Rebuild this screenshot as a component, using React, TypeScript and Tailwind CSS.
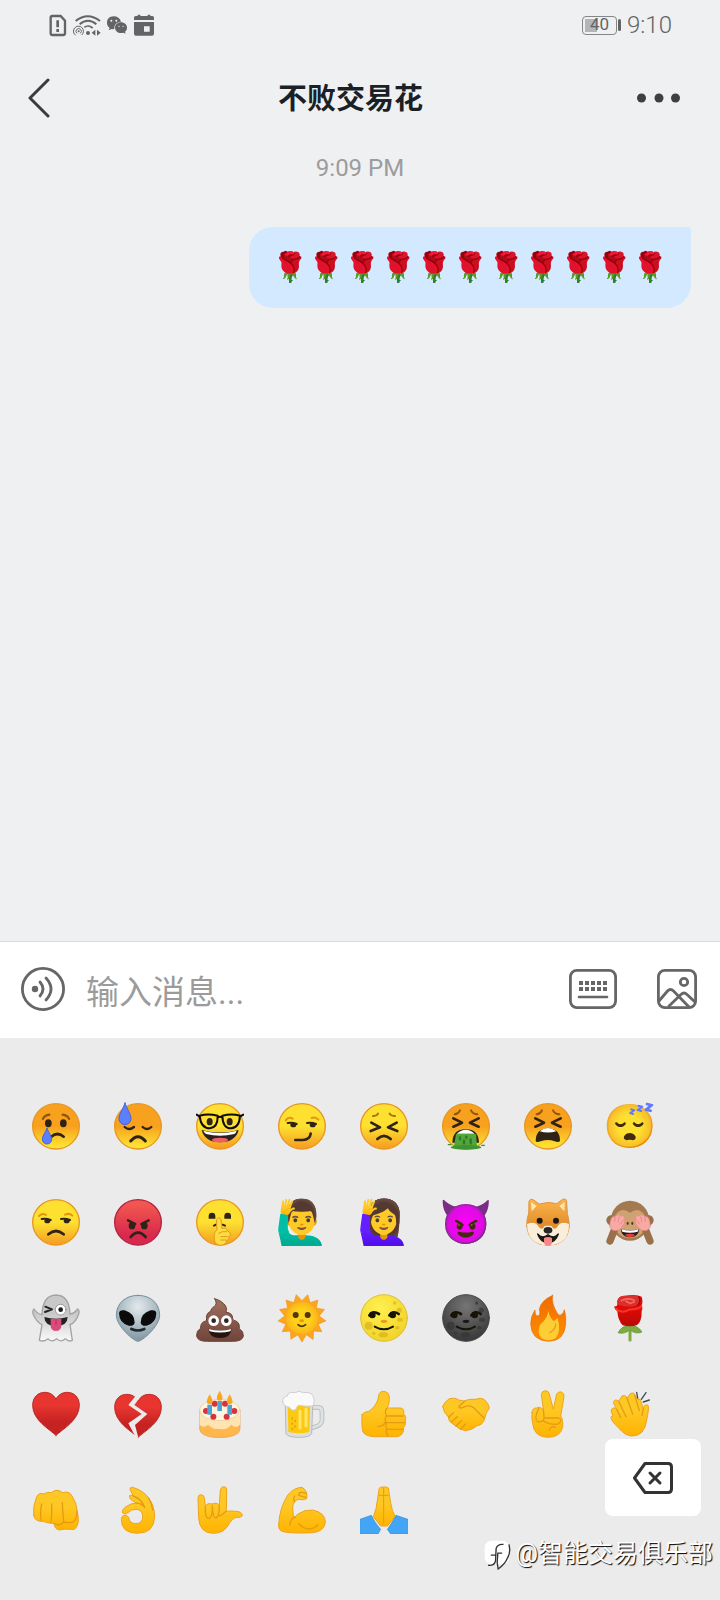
import React from 'react';

type Tone = 'yellow' | 'orange' | 'red';

interface FaceProps {
  tone?: Tone;
  children: React.ReactNode;
}

interface EmojiItem {
  char: string;
  label: string;
  art?: React.ReactNode;
}

const fills: Record<Tone, string> = {
  yellow: 'url(#tone-yellow)',
  orange: 'url(#tone-orange)',
  red: 'url(#tone-red)',
};

const INK = '#2f2316';

const Gradients = () => (
  <svg className="absolute h-0 w-0" aria-hidden="true">
    <defs>
      <linearGradient id="tone-yellow" x1="0" y1="0" x2="0" y2="1">
        <stop offset="0.5" stopColor="#fde030" />
        <stop offset="1" stopColor="#f59b22" />
      </linearGradient>
      <linearGradient id="tone-orange" x1="0" y1="0" x2="0" y2="1">
        <stop offset="0.5" stopColor="#f7a11f" />
        <stop offset="0.92" stopColor="#fde030" />
      </linearGradient>
      <linearGradient id="tone-red" x1="0" y1="0" x2="0" y2="1">
        <stop offset="0.1" stopColor="#f2574f" />
        <stop offset="0.8" stopColor="#d8284e" />
      </linearGradient>
      <linearGradient id="heart" x1="0" y1="0" x2="0" y2="1">
        <stop offset="0.3" stopColor="#e8352f" />
        <stop offset="0.7" stopColor="#c62222" />
      </linearGradient>
      <linearGradient id="flame" x1="0" y1="0" x2="0" y2="1">
        <stop offset="0" stopColor="#f06a00" />
        <stop offset="1" stopColor="#ff8f00" />
      </linearGradient>
      <linearGradient id="shiba" x1="0" y1="0" x2="0" y2="1">
        <stop offset="0" stopColor="#fdb54a" />
        <stop offset="0.6" stopColor="#e08c2b" />
      </linearGradient>
      <linearGradient id="skin" x1="0" y1="0" x2="0" y2="1">
        <stop offset="0.4" stopColor="#fec824" />
        <stop offset="1" stopColor="#ffb300" />
      </linearGradient>
      <linearGradient id="ghost" x1="0" y1="0" x2="0" y2="1">
        <stop offset="0.4" stopColor="#c8c8c8" />
        <stop offset="1" stopColor="#fafafa" />
      </linearGradient>
      <linearGradient id="poop" x1="0" y1="0" x2="0" y2="1">
        <stop offset="0" stopColor="#a1705f" />
        <stop offset="1" stopColor="#70453a" />
      </linearGradient>
      <linearGradient id="petal" x1="0" y1="0" x2="0" y2="1">
        <stop offset="0.4" stopColor="#e20a05" />
        <stop offset="1" stopColor="#b70a08" />
      </linearGradient>
      <radialGradient id="alien" cx="0.5" cy="0.25" r="0.7">
        <stop offset="0" stopColor="#e3eaee" />
        <stop offset="1" stopColor="#869ba6" />
      </radialGradient>
      <radialGradient id="sun" cx="0.5" cy="0.5" r="0.5">
        <stop offset="0.5" stopColor="#fdd31a" />
        <stop offset="1" stopColor="#fbb51c" />
      </radialGradient>
      <radialGradient id="moon-dark" cx="0.5" cy="0.25" r="0.7">
        <stop offset="0" stopColor="#757575" />
        <stop offset="1" stopColor="#3c3c3c" />
      </radialGradient>
      <radialGradient id="moon-light" cx="0.4" cy="0.3" r="0.7">
        <stop offset="0" stopColor="#fff04f" />
        <stop offset="1" stopColor="#f2d42a" />
      </radialGradient>
    </defs>
  </svg>
);

const Art = ({ children }: { children: React.ReactNode }) => (
  <svg viewBox="0 0 144 144" className="h-12 w-12" fill="none" strokeLinecap="round" strokeLinejoin="round" aria-hidden="true">
    {children}
  </svg>
);

const Face: React.FC<FaceProps> = ({ tone = 'yellow', children }) => (
  <Art>
    <ellipse cx="72" cy="73" rx="70" ry="68" fill={fills[tone]} stroke={tone === 'red' ? '#b3233f' : '#e8961f'} strokeWidth="4" />
    {children}
  </Art>
);

const Hand = ({ shape, lines, children }: { shape: string; lines: string; children?: React.ReactNode }) => (
  <Art>
    <path d={shape} fill="url(#skin)" stroke="#efa31d" strokeWidth="3" />
    <path d={lines} stroke="#e59b14" strokeWidth="4" />
    {children}
  </Art>
);

const Squint = () => (
  <path d="M34 49 60 62 34 74M110 49 84 62 110 74" stroke={INK} strokeWidth="8" />
);

const SideEyes = () => (
  <g>
    <path d="M29 63Q42 60 56 66M87 63Q100 60 114 66" stroke={INK} strokeWidth="6" />
    <ellipse cx="46" cy="69" rx="9" ry="7" fill={INK} />
    <ellipse cx="104" cy="69" rx="9" ry="7" fill={INK} />
  </g>
);

const Moon = ({ dark = false }: { dark?: boolean }) => (
  <Art>
    <circle cx="72" cy="72" r="70" fill={dark ? 'url(#moon-dark)' : 'url(#moon-light)'} stroke={dark ? '#444' : '#dcbf35'} strokeWidth="3" />
    <g fill={dark ? '#353535' : '#d9b21c'} opacity="0.7">
      <circle cx="26" cy="95" r="12" />
      <circle cx="118" cy="49" r="8" />
      <circle cx="104" cy="27" r="5" />
      <ellipse cx="120" cy="77" rx="9" ry="6" />
      <ellipse cx="112" cy="101" rx="7" ry="5" />
      <ellipse cx="70" cy="122" rx="14" ry="8" />
      <circle cx="41" cy="118" r="5" />
    </g>
    <path d="M28 64Q38 48 57 60M88 64Q98 48 116 60" stroke="#171407" strokeWidth="8" />
    <circle cx="37" cy="63" r="10" fill="#171407" />
    <circle cx="98" cy="63" r="10" fill="#171407" />
    <ellipse cx="72" cy="82" rx="10" ry="5" fill={dark ? '#171717' : '#ee9a13'} />
    <path d="M44 98Q72 114 99 98" stroke="#171407" strokeWidth="6" />
  </Art>
);

const HEART = 'M72 136C50 116 2 90 2 46 2 20 20 7 38 7 54 7 66 15 72 28 78 15 90 7 106 7 124 7 142 20 142 46 142 90 94 116 72 136Z';

const RAYS = 13;
const sunPoints = Array.from({ length: RAYS * 2 }, (_, i) => {
  const angle = (Math.PI * i) / RAYS + Math.PI / 2 - Math.PI / RAYS;
  const r = i % 2 === 0 ? 52 : 72;
  return `${(72 + r * Math.cos(angle)).toFixed(1)},${(72 + r * Math.sin(angle)).toFixed(1)}`;
}).join(' ');

const crying = (
  <Face tone="orange">
    <path d="M33 50Q38 40 52 38M92 38Q106 40 111 50" stroke="#93550c" strokeWidth="7" />
    <ellipse cx="49" cy="64" rx="10" ry="12" fill={INK} />
    <ellipse cx="94" cy="64" rx="10" ry="12" fill={INK} />
    <path d="M58 104Q76 88 95 104" stroke={INK} strokeWidth="8" />
    <path d="M45 79C49 92 59 100 59 112A14 14 0 0 1 31 112C31 100 41 92 45 79Z" fill="#5c7fff" stroke="#4a62d0" strokeWidth="3" />
  </Face>
);

const sweating = (
  <Face tone="orange">
    <path d="M33 3C38 20 51 36 51 50A18 18 0 0 1 15 50C15 36 28 20 33 3Z" fill="#5c7fff" stroke="#4a62d0" strokeWidth="3" />
    <path d="M32 75Q45 87 60 75M86 75Q99 87 112 75" stroke={INK} strokeWidth="7" />
    <path d="M50 117Q72 91 94 117" stroke={INK} strokeWidth="9" />
  </Face>
);

const nerd = (
  <Face>
    <ellipse cx="41" cy="59" rx="9" ry="11" fill={INK} />
    <ellipse cx="101" cy="59" rx="9" ry="11" fill={INK} />
    <path d="M17 84Q72 99 128 84 119 120 72 121 26 120 17 84Z" fill="#2b2020" />
    <path d="M22 86Q72 100 122 86 120 93 115 96 72 106 30 96 24 92 22 86Z" fill="#fff" />
    <ellipse cx="72" cy="114" rx="24" ry="7" fill="#ee5e68" />
    <path d="M11 41Q36 34 65 41 66 77 42 79 14 79 11 41ZM79 41Q107 34 132 41 130 78 105 79 80 79 79 41ZM65 46Q72 43 79 46M2 38 11 44M142 38 132 44" stroke="#0c0c0c" strokeWidth="6" />
  </Face>
);

const smirking = (
  <Face>
    <path d="M23 55Q31 43 44 50M101 48Q113 43 121 53" stroke="#e5960f" strokeWidth="6" />
    <SideEyes />
    <path d="M52 114H74Q96 113 98 95" stroke={INK} strokeWidth="8" />
  </Face>
);

const persevering = (
  <Face>
    <path d="M39 42Q49 43 54 35M89 35Q94 43 105 42" stroke="#ad7008" strokeWidth="6" />
    <path d="M34 62 60 76 32 87M110 62 84 76 112 87" stroke={INK} strokeWidth="8" />
    <path d="M52 111Q72 92 92 111" stroke={INK} strokeWidth="8" />
  </Face>
);

const vomiting = (
  <Face tone="orange">
    <path d="M38 37Q49 36 54 25M87 25Q92 36 106 37" stroke="#93550c" strokeWidth="6" />
    <Squint />
    <path d="M31 122Q32 82 71 82 110 82 111 122Z" fill={INK} />
    <path d="M44 95Q72 72 98 95Z" fill="#fff" />
    <path d="M42 96H102L105 132H36Z" fill="#53a63b" />
    <ellipse cx="72" cy="136" rx="46" ry="7" fill="#3f9430" />
    <path d="M54 106V112M66 116V124M73 104V107M86 112V124" stroke="#2c7a24" strokeWidth="7" />
    <path d="M19 128H27M119 130H127" stroke="#3f9430" strokeWidth="4" />
  </Face>
);

const tired = (
  <Face tone="orange">
    <path d="M38 37Q49 36 54 25M87 25Q92 36 106 37" stroke="#93550c" strokeWidth="6" />
    <Squint />
    <path d="M35 117Q36 80 72 79 108 80 108 117 104 123 92 118 72 110 50 118 36 123 35 117Z" fill={INK} />
    <path d="M47 88Q71 68 97 88 72 95 47 88Z" fill="#fff" />
  </Face>
);

const unamused = (
  <Face>
    <path d="M21 54Q31 44 42 51M99 50Q112 44 121 53" stroke="#e5960f" strokeWidth="6" />
    <SideEyes />
    <path d="M49 109Q72 89 95 109" stroke={INK} strokeWidth="8" />
  </Face>
);

const enraged = (
  <Face tone="red">
    <path d="M42 67 64 78M104 67 82 78" stroke={INK} strokeWidth="7" />
    <ellipse cx="54" cy="83" rx="10" ry="11" fill={INK} />
    <ellipse cx="91" cy="83" rx="10" ry="11" fill={INK} />
    <path d="M50 117Q72 91 95 117" stroke={INK} strokeWidth="8" />
  </Face>
);

const shushing = (
  <Face>
    <path d="M38 62V54A10 10 0 0 1 58 54V62ZM85 62V54A10 10 0 0 1 105 54V62Z" fill={INK} />
    <path d="M54 83 60 80M80 80 87 83" stroke={INK} strokeWidth="6" />
    <path d="M62 64Q69 54 75 64L78 92Q90 86 94 98 107 104 101 116 98 126 92 128 90 141 72 142 56 140 55 124 52 104 62 96Z" fill="#fddc40" stroke="#df9a1e" strokeWidth="3" />
    <path d="M68 106Q78 98 92 101M74 116H97M74 126H91" stroke="#df9a1e" strokeWidth="3" />
  </Face>
);

const shiba = (
  <Art>
    <path d="M15 10Q18 0 29 6L46 18Q72 9 98 17L116 4Q128 0 128 12L130 46Q136 68 136 86 130 141 72 142 14 141 8 84 8 62 14 46Z" fill="url(#shiba)" stroke="#dd9642" strokeWidth="3" />
    <path d="M21 12 38 24 23 40ZM122 12 106 24 121 40Z" fill="#ffe7b5" />
    <path d="M9 78Q34 68 44 86 72 80 100 86 110 68 135 78 136 141 72 142 10 141 9 78Z" fill="#faeedb" />
    <path d="M44 87Q55 98 60 86L72 72 84 86Q90 98 100 87 88 70 72 70 56 70 44 87Z" fill="#df8d2e" />
    <circle cx="47" cy="68" r="9" fill="#1c1712" />
    <circle cx="96" cy="68" r="9" fill="#1c1712" />
    <ellipse cx="72" cy="97" rx="13" ry="10" fill="#262626" />
    <path d="M41 108Q54 124 72 110 90 124 103 108 94 134 72 134 50 134 41 108Z" fill="#1c1712" stroke="#1c1712" strokeWidth="4" />
    <path d="M60 120Q72 114 84 120V132A12 11 0 0 1 60 132Z" fill="#f78787" />
  </Art>
);

const monkey = (
  <Art>
    <circle cx="17" cy="67" r="16" fill="#99704a" />
    <circle cx="127" cy="67" r="16" fill="#99704a" />
    <ellipse cx="72" cy="68" rx="58" ry="60" fill="#a37a4f" />
    <path d="M72 44Q42 24 26 56 20 118 72 121 124 118 118 56 102 24 72 44Z" fill="#d0a173" />
    <ellipse cx="65" cy="76" rx="3" ry="5" fill="#5b3b22" />
    <ellipse cx="79" cy="76" rx="3" ry="5" fill="#5b3b22" />
    <path d="M44 92Q72 102 100 92 97 118 72 118 47 118 44 92Z" fill="#2b2020" />
    <path d="M46 93Q72 102 98 93L95 101Q72 107 49 101Z" fill="#fff" />
    <ellipse cx="72" cy="112" rx="14" ry="5" fill="#ec3b33" />
    <path d="M12 129 25 96M132 129 119 96" stroke="#99704a" strokeWidth="22" />
    <path d="M11 84Q14 52 27 56 38 46 44 54 58 50 54 64 60 70 49 86 36 102 20 96 11 92 11 84ZM133 84Q130 52 117 56 106 46 100 54 86 50 90 64 84 70 95 86 108 102 124 96 133 92 133 84Z" fill="#f9a9a4" stroke="#e58c8a" strokeWidth="2" />
    <path d="M27 58 26 70M40 56 36 72M52 66 43 78M117 58 118 70M104 56 108 72M92 66 101 78" stroke="#e58c8a" strokeWidth="3" />
  </Art>
);

const ghost = (
  <Art>
    <path d="M30 62Q32 4 72 3 112 4 114 60 128 58 137 45 146 50 136 70 126 88 114 92L121 139Q110 145 100 134 86 147 74 134 58 147 48 134 34 145 22 139L30 92Q14 84 4 62 0 50 6 45 16 60 30 62Z" fill="url(#ghost)" stroke="#a3a3a3" strokeWidth="4" />
    <path d="M40 38 60 46 39 54" stroke="#222" strokeWidth="6" />
    <circle cx="86" cy="47" r="16" fill="#fff" stroke="#777" strokeWidth="2" />
    <circle cx="86" cy="47" r="7" fill="#1b1b1b" />
    <path d="M37 69Q72 80 107 69 106 96 72 97 38 96 37 69Z" fill="#222" />
    <path d="M56 74H88V95A16 16 0 0 1 56 95Z" fill="#d94b7b" />
    <path d="M72 76V92" stroke="#b92d61" strokeWidth="3" />
  </Art>
);

const alien = (
  <Art>
    <path d="M72 4C112 4 137 30 137 64 136 98 84 142 72 142 60 142 8 98 7 64 7 30 32 4 72 4Z" fill="url(#alien)" stroke="#78909c" strokeWidth="3" />
    <path d="M15 58Q16 46 32 49 62 58 62 86 60 97 44 95 16 88 15 58ZM127 58Q126 46 110 49 80 58 80 86 82 97 98 95 126 88 127 58Z" fill="#0b0b0b" />
    <path d="M52 105Q72 114 91 105" stroke="#1f292e" strokeWidth="8" />
  </Art>
);

const poop = (
  <Art>
    <path d="M56 14Q78 20 89 36 94 46 90 55 110 56 110 74 110 80 122 82 132 88 130 104 143 112 142 126 140 142 110 142H34Q4 142 2 126 2 108 14 104 12 84 32 80 28 58 44 52 44 44 54 38 66 30 56 14Z" fill="url(#poop)" stroke="#6b4238" strokeWidth="3" />
    <circle cx="53" cy="80" r="16" fill="#fff" />
    <circle cx="91" cy="80" r="16" fill="#fff" />
    <circle cx="53" cy="80" r="7" fill="#2d2422" />
    <circle cx="91" cy="80" r="7" fill="#2d2422" />
    <path d="M37 104Q72 114 107 104 104 132 72 132 40 132 37 104Z" fill="#241513" />
    <path d="M38 105Q72 114 106 105L103 112Q72 119 41 112Z" fill="#fff" />
  </Art>
);

const sun = (
  <Art>
    <polygon points={sunPoints} fill="#fba61c" stroke="#ef941a" strokeWidth="2" />
    <circle cx="72" cy="72" r="48" fill="url(#sun)" />
    <circle cx="53" cy="63" r="9" fill="#523616" />
    <circle cx="89" cy="63" r="9" fill="#523616" />
    <ellipse cx="71" cy="80" rx="7" ry="4" fill="#f0920f" />
    <path d="M60 92Q71 102 83 92" stroke="#523616" strokeWidth="5" />
  </Art>
);

const fire = (
  <Art>
    <path d="M86 4Q82 30 99 56 105 68 112 62 118 58 121 47 127 66 125 92 120 141 74 142 22 140 20 90 20 66 33 48 33 66 42 66 50 64 46 46 50 20 86 4Z" fill="url(#flame)" stroke="#e57416" strokeWidth="2" />
    <path d="M73 50Q76 68 89 82L101 72Q107 92 105 108 102 138 74 139 44 136 44 110 44 92 57 84 71 68 73 50Z" fill="#fdcd35" />
    <path d="M95 90Q96 104 78 116" stroke="#ef9b20" strokeWidth="4" />
  </Art>
);

const rose = (
  <Art>
    <path d="M72 98V142" stroke="#7cab42" strokeWidth="9" strokeLinecap="butt" />
    <path d="M72 94Q48 94 36 116 56 122 71 108 90 122 108 114 96 94 72 94Z" fill="#7cab42" stroke="#5f9136" strokeWidth="2" />
    <path d="M34 20Q38 4 60 5 92 0 107 8 112 26 106 36 112 42 107 50 108 84 92 94 72 100 50 94 36 80 34 52 22 42 26 36 36 40 34 20Z" fill="url(#petal)" />
    <path d="M34 20Q38 4 60 5 86 2 98 8 104 26 88 36 62 40 40 34 32 30 34 20Z" fill="#d9302c" />
    <path d="M46 20Q62 10 84 18 88 26 72 28L60 22" stroke="#f26a66" strokeWidth="5" />
    <path d="M98 8Q106 22 96 34" stroke="#9d0b0b" strokeWidth="4" />
    <path d="M30 44Q44 56 58 52 72 44 84 46 98 44 106 38" stroke="#f7332c" strokeWidth="6" />
  </Art>
);

const heart = (
  <Art>
    <path d={HEART} fill="url(#heart)" stroke="#b92c2a" strokeWidth="3" />
  </Art>
);

const brokenHeart = (
  <Art>
    <g transform="translate(0 6)">
      <path d={HEART} fill="url(#heart)" stroke="#b92c2a" strokeWidth="3" />
      <path d="M68 8 43 39 83 66 43 94 66 137H73L63 99 100 66 61 39 83 10 72 0Z" fill="#ebebeb" />
    </g>
  </Art>
);

const cake = (
  <Art>
    <path d="M11 60V118Q14 142 71 143 128 142 132 118V60Z" fill="#ffb74d" stroke="#e3a04a" strokeWidth="2" />
    <path d="M11 58V104Q22 116 36 104 52 120 71 116 90 122 106 104 120 118 132 104V58Z" fill="#ffe3b0" />
    <ellipse cx="71" cy="60" rx="60" ry="32" fill="#fff4df" stroke="#e8c48e" strokeWidth="2" />
    <g fill="#d5333f">
      <circle cx="56" cy="41" r="9" />
      <circle cx="87" cy="41" r="9" />
      <circle cx="30" cy="63" r="9" />
      <circle cx="115" cy="63" r="9" />
      <circle cx="52" cy="80" r="9" />
      <circle cx="92" cy="80" r="9" />
    </g>
    <path d="M41 44V74M71 33V63M101 44V74" stroke="#4ba3d6" strokeWidth="14" strokeLinecap="butt" />
    <path d="M41 13Q58 42 41 43 24 42 41 13ZM71 2Q88 31 71 32 54 31 71 2ZM101 13Q118 42 101 43 84 42 101 13Z" fill="#fba61c" />
  </Art>
);

const beer = (
  <Art>
    <path d="M98 52H122Q132 54 132 66V92Q130 108 98 114" stroke="#b5b9bb" strokeWidth="14" />
    <path d="M98 52H122Q132 54 132 66V92Q130 108 98 114" stroke="#dfe2e3" strokeWidth="9" />
    <path d="M22 46 24 130Q28 142 62 142 98 142 101 130L104 46Z" fill="#dcdfe0" stroke="#b5b9bb" strokeWidth="3" />
    <path d="M29 46 31 126Q62 134 94 126L97 46Z" fill="#fdc90f" />
    <path d="M66 64V114M84 58V108" stroke="#ffe56a" strokeWidth="9" />
    <path d="M43 84V86M52 92V94M42 100V102M51 108V110M43 116V118" stroke="#e0a010" strokeWidth="5" />
    <path d="M14 34Q14 20 28 18 30 4 50 8 64 0 76 8 100 4 106 20 112 38 104 48 82 50 62 46 56 48 54 58 42 66 34 52 14 48 14 34Z" fill="#fafafa" stroke="#cfcfcf" strokeWidth="3" />
  </Art>
);

const thumbsUp = (
  <Hand
    shape="M6 74Q10 66 26 64 46 52 54 28 56 4 68 4 90 4 88 28 88 42 82 54H122Q134 56 131 72 140 78 136 92 139 104 131 112 132 136 112 140H60Q24 142 12 130 4 126 6 74Z"
    lines="M80 55Q72 66 80 78H130M79 78Q72 90 80 98H133M80 98Q74 110 82 118H128M80 118Q76 128 84 138M54 110Q72 108 76 96"
  />
);

const handshake = (
  <Hand
    shape="M2 50Q6 36 22 26 40 22 50 30L66 33Q80 26 100 28 116 22 126 28 140 40 142 54 130 70 128 86 124 104 104 108 92 120 70 122 50 118 36 104 18 94 20 82 4 66 2 50Z"
    lines="M68 34 50 50Q54 58 68 50 84 44 96 54L126 84M20 82 34 68M28 96 46 80M42 108 58 92M56 118 70 102"
  />
);

const victory = (
  <Hand
    shape="M24 68Q26 52 38 54 44 48 58 58L52 14Q54 2 64 2 74 2 76 12L88 58 98 12Q102 4 112 6 122 10 120 20L110 78Q118 88 116 112 108 142 72 142 30 142 26 100 22 84 24 68Z"
    lines="M58 58 60 82M44 56Q28 88 42 96 60 96 60 84H104Q118 90 102 102 78 106 60 94M94 112Q80 106 76 120"
  />
);

const clapping = (
  <Hand
    shape="M16 60Q22 48 32 58L22 38Q26 24 38 34L48 18Q56 12 64 24L72 12Q82 4 88 16L94 28Q104 24 106 38L112 56Q116 40 126 46 130 52 122 90 116 138 78 138 58 138 36 112 16 92 16 86 12 78 22 78 14 68 16 60Z"
    lines="M38 34 60 80M62 22 80 72M86 16 100 62M32 58 44 82M112 56 108 76"
  >
    <path d="M92 7 95 24M120 8 106 28M130 30 112 36" stroke="#434c54" strokeWidth="4" />
  </Hand>
);

const fist = (
  <Hand
    shape="M5 88Q2 60 14 32 22 18 36 24 46 16 58 20 74 6 92 20 112 14 120 30 134 50 136 76 142 104 136 118 130 134 116 130 98 128 82 132 68 130 66 112 44 112 34 106 8 108 5 88Z"
    lines="M29 54Q24 76 27 102M59 54Q60 80 57 110M91 50Q92 80 95 108 84 122 66 112M95 108Q110 112 124 108 136 98 134 76"
  />
);

const okHand = (
  <Hand
    shape="M26 80Q22 72 36 62 50 52 66 51L50 40Q40 22 58 30L48 10Q48 0 62 6 90 16 104 36 122 60 122 92 120 142 70 142 22 142 22 100 24 84 38 88L44 94Q46 113 66 113 86 112 86 92 86 71 66 70 50 70 42 80 30 86 26 80Z"
    lines="M58 30Q82 38 92 64M66 51Q84 52 92 64M104 36Q114 54 116 72"
  />
);

const loveYou = (
  <Hand
    shape="M6 36Q6 26 14 26 24 26 25 36L28 60Q34 50 48 54 60 48 70 56L73 12Q76 2 83 2 92 2 92 12L91 76Q104 74 118 76 138 76 139 88 136 96 120 94 108 98 100 112 86 142 52 142 10 142 8 96Z"
    lines="M28 62Q26 96 38 98 50 96 49 60 50 96 60 96 70 94 70 58M70 90Q78 88 90 76"
  />
);

const muscle = (
  <Hand
    shape="M2 116Q4 66 30 26 50 4 72 4 90 14 86 38 78 44 62 40 46 44 44 64L46 92Q52 94 60 84 80 70 104 72 142 80 142 108 140 136 104 140 50 143 20 138 0 136 2 116Z"
    lines="M62 112Q90 144 120 116M36 118Q36 96 52 94M84 22Q62 14 62 28 74 32 84 34M50 46Q44 40 50 30"
  />
);

const praying = (
  <Art>
    <path d="M58 6Q60 2 71 3 82 2 85 6L92 50Q96 76 106 92L82 120H62L40 92Q50 70 52 44Z" fill="url(#skin)" stroke="#efa31d" strokeWidth="3" />
    <path d="M71 6V112M58 28H84" stroke="#e59b14" strokeWidth="3" />
    <path d="M0 100 34 88Q44 110 62 130L54 144H0ZM144 100 108 88Q98 108 82 130L92 144H144Z" fill="#42a5f5" stroke="#3190d6" strokeWidth="2" />
  </Art>
);

const emojis: EmojiItem[] = [
  { char: '😢', label: '哭泣', art: crying },
  { char: '😓', label: '冷汗', art: sweating },
  { char: '🤓', label: '书呆子', art: nerd },
  { char: '😏', label: '得意', art: smirking },
  { char: '😣', label: '痛苦', art: persevering },
  { char: '🤮', label: '呕吐', art: vomiting },
  { char: '😫', label: '累', art: tired },
  { char: '😴', label: '睡觉' },
  { char: '😒', label: '不高兴', art: unamused },
  { char: '😡', label: '愤怒', art: enraged },
  { char: '🤫', label: '安静', art: shushing },
  { char: '🙋‍♂️', label: '男生举手' },
  { char: '🙋‍♀️', label: '女生举手' },
  { char: '😈', label: '恶魔' },
  { char: '🐶', label: '狗', art: shiba },
  { char: '🙈', label: '非礼勿视', art: monkey },
  { char: '👻', label: '鬼', art: ghost },
  { char: '👽', label: '外星人', art: alien },
  { char: '💩', label: '大便', art: poop },
  { char: '🌞', label: '太阳', art: sun },
  { char: '🌝', label: '满月', art: <Moon /> },
  { char: '🌚', label: '新月', art: <Moon dark /> },
  { char: '🔥', label: '火', art: fire },
  { char: '🌹', label: '玫瑰', art: rose },
  { char: '❤️', label: '红心', art: heart },
  { char: '💔', label: '心碎', art: brokenHeart },
  { char: '🎂', label: '蛋糕', art: cake },
  { char: '🍺', label: '啤酒', art: beer },
  { char: '👍', label: '赞', art: thumbsUp },
  { char: '🤝', label: '握手', art: handshake },
  { char: '✌️', label: '胜利', art: victory },
  { char: '👏', label: '鼓掌', art: clapping },
  { char: '👊', label: '拳头', art: fist },
  { char: '👌', label: '好的', art: okHand },
  { char: '🤟', label: '爱你', art: loveYou },
  { char: '💪', label: '肌肉', art: muscle },
  { char: '🙏', label: '祈祷', art: praying },
];

const StatusBar = () => (
  <div className="flex h-[50px] items-center justify-between pl-[49px] pr-12 text-[#636466]">
    <div className="flex items-center gap-[5px]">
      <svg viewBox="147 39 54 69" className="h-[23px] w-[18px]" fill="none">
        <path d="M157 45H182L195 59V97Q195 102 190 102H157Q152 102 152 97V50Q152 45 157 45Z" stroke="currentColor" strokeWidth="7" />
        <path d="M173 58V79M173 84V93" stroke="currentColor" strokeWidth="8" />
      </svg>
      <svg viewBox="213 39 87 69" className="h-[23px] w-[29px]" fill="none" stroke="currentColor">
        <path d="M224 60Q260 31 297 60M236 70Q261 49 286 70" strokeWidth="6" />
        <path d="M250 79Q262 70 275 81" strokeWidth="5" />
        <path d="M224 103A15 15 0 1 1 242 102M228 97A8 8 0 1 1 238 97" strokeWidth="3" />
        <circle cx="233" cy="91" r="3" fill="currentColor" stroke="none" />
        <circle cx="261" cy="96" r="6" fill="currentColor" stroke="none" />
        <path d="M272 95 283 86V104ZM299 95 288 86V104Z" fill="currentColor" stroke="none" />
      </svg>
      <svg viewBox="315 39 66 69" className="h-[23px] w-[22px]" fill="currentColor">
        <path d="M338 46C325 46 318 55 318 65 318 72 321 77 326 81L323 88 332 84Q336 85 340 84C339 70 348 63 360 62 357 52 349 46 338 46Z" />
        <path d="M360 64C350 64 342 71 342 80S350 96 360 96Q364 96 367 95L374 98 372 92C376 89 378 85 378 80 378 71 370 64 360 64Z" />
        <g fill="#eff0f2">
          <circle cx="331" cy="59" r="3" />
          <circle cx="346" cy="59" r="3" />
          <circle cx="354" cy="76" r="2" />
          <circle cx="366" cy="76" r="2" />
        </g>
      </svg>
      <svg viewBox="399 39 66 69" className="h-[23px] w-[22px]" fill="currentColor">
        <path d="M402 57V50Q402 45 407 45H413V41H421V45H443V41H451V45H457Q462 45 462 50V57Z" />
        <path fillRule="evenodd" d="M402 63H462V98Q462 104 456 104H408Q402 104 402 98ZM432 76V92H449V76Z" />
      </svg>
    </div>
    <div className="flex items-center gap-[6px]">
      <div className="flex items-center gap-px">
        <div className="relative flex h-[19px] w-[35px] items-center justify-center rounded-[4px] border border-[#858688] text-[17px]">
          <span className="absolute inset-y-[2px] left-[2px] w-[12px] bg-[#b4b5b6]" />
          <span className="relative">40</span>
        </div>
        <span className="h-3 w-[3px] rounded-sm bg-[#636466]" />
      </div>
      <span className="text-[24px] font-light">9:10</span>
    </div>
  </div>
);

const ChatHeader = () => (
  <header className="flex h-24 items-center pl-7 pr-10">
    <button aria-label="返回" className="w-9">
      <svg viewBox="0 0 22 40" className="h-10 w-[22px]" fill="none" stroke="#3b3b3b" strokeWidth="3" strokeLinecap="round" strokeLinejoin="round">
        <path d="M20 2 2 20 20 38" />
      </svg>
    </button>
    <h1 className="flex-1 pt-1 text-center text-[29px] font-bold text-[#1b1f26]">不败交易花</h1>
    <button aria-label="更多" className="w-[43px]">
      <svg viewBox="0 0 43 10" className="h-[10px] w-[43px]" fill="#3f3f3f">
        <circle cx="4.5" cy="5" r="4.5" />
        <circle cx="22" cy="5" r="4.5" />
        <circle cx="38.5" cy="5" r="4.5" />
      </svg>
    </button>
  </header>
);

const InputBar = () => (
  <div className="flex h-[97px] items-center border-t border-[#dadbdb] bg-white pb-[2px] pl-[21px] pr-[23px]">
    <button aria-label="语音">
      <svg viewBox="0 0 44 44" className="h-11 w-11" fill="none" stroke="#666" strokeWidth="2.8" strokeLinecap="round">
        <circle cx="22" cy="22" r="20.6" />
        <circle cx="14" cy="22" r="3.2" fill="#666" stroke="none" />
        <path d="M19 15Q25 22 19 29M25 11Q35 22 25 33" />
      </svg>
    </button>
    <input
      type="text"
      aria-label="消息"
      placeholder="输入消息..."
      className="ml-[21px] mt-2 min-w-0 flex-1 bg-transparent text-[33px] text-[#333] outline-none placeholder:text-[#9b9b9b]"
    />
    <button aria-label="键盘">
      <svg viewBox="0 0 48 40" className="h-10 w-12" fill="none" stroke="#666">
        <rect x="1.4" y="1.4" width="45.2" height="37.2" rx="6.5" strokeWidth="2.8" />
        <path d="M10 14H38.5M10 20H38.5" strokeWidth="4" strokeDasharray="4 2" />
        <path d="M10 28H38" strokeWidth="2.6" strokeLinecap="round" />
      </svg>
    </button>
    <button aria-label="图片" className="ml-10">
      <svg viewBox="0 0 40 40" className="h-10 w-10" fill="none" stroke="#666" strokeWidth="2.8" strokeLinecap="round">
        <rect x="1.4" y="1.4" width="37.2" height="37.2" rx="6.5" />
        <circle cx="27" cy="13" r="3.7" />
        <path d="M2 32 10.5 22Q13.5 19 16.5 22L32 38M12 37 24 25.5Q27 22.5 30 25.5L38 33" />
      </svg>
    </button>
  </div>
);

const EmojiPanel = () => (
  <section aria-label="表情" className="relative bg-[#ebebeb] px-[15px] pb-[42px] pt-10">
    <div className="flex flex-wrap">
      {emojis.map(item => (
        <button key={item.char} aria-label={item.label} className="flex h-24 w-[82px] items-center justify-center text-[43px]">
          {item.art ?? item.char}
        </button>
      ))}
    </div>
    <button aria-label="删除" className="absolute bottom-[84px] right-[19px] flex h-[77px] w-24 items-center justify-center rounded-lg bg-white">
      <svg viewBox="0 0 40 32" className="h-8 w-10" fill="none" stroke="#333" strokeWidth="3" strokeLinejoin="round" strokeLinecap="round">
        <path d="M12 1.5H35Q38.5 1.5 38.5 5V27Q38.5 30.5 35 30.5H12L1.5 16Z" />
        <path d="M17 11 27 21M27 11 17 21" />
      </svg>
    </button>
    <div className="absolute bottom-7 right-[7px] flex items-center gap-[5px]">
      <svg viewBox="366 334 80 92" className="h-[31px] w-[27px]" fill="none">
        <rect x="368" y="339" width="73" height="70" rx="20" fill="#fff" />
        <path d="M440 350Q446 374 436 390 428 410 408 423L405 404 407 376H420M386 382H402" stroke="#333" strokeWidth="4" />
        <path d="M378 412Q396 414 400 400L402 362Q406 348 424 350" stroke="#333" strokeWidth="4" />
      </svg>
      <span className="text-[25px] leading-9 text-white [text-shadow:1px_1px_1px_#000]">@智能交易俱乐部</span>
    </div>
  </section>
);

export default function App() {
  return (
    <div className="flex min-h-screen flex-col bg-[#eff0f2] font-['Roboto','Noto_Sans_CJK_SC',sans-serif]">
      <Gradients />
      <StatusBar />
      <ChatHeader />
      <main className="flex flex-1 flex-col px-[29px]">
        <time className="text-center text-[24px] leading-[44px] text-[#9b9c9d]">9:09 PM</time>
        <p className="mt-[37px] flex h-[81px] items-center self-end rounded-3xl rounded-tr-[3px] bg-[#d3e9ff] px-[23px] text-[29px]">
          {'🌹'.repeat(11)}
        </p>
      </main>
      <InputBar />
      <EmojiPanel />
    </div>
  );
}
